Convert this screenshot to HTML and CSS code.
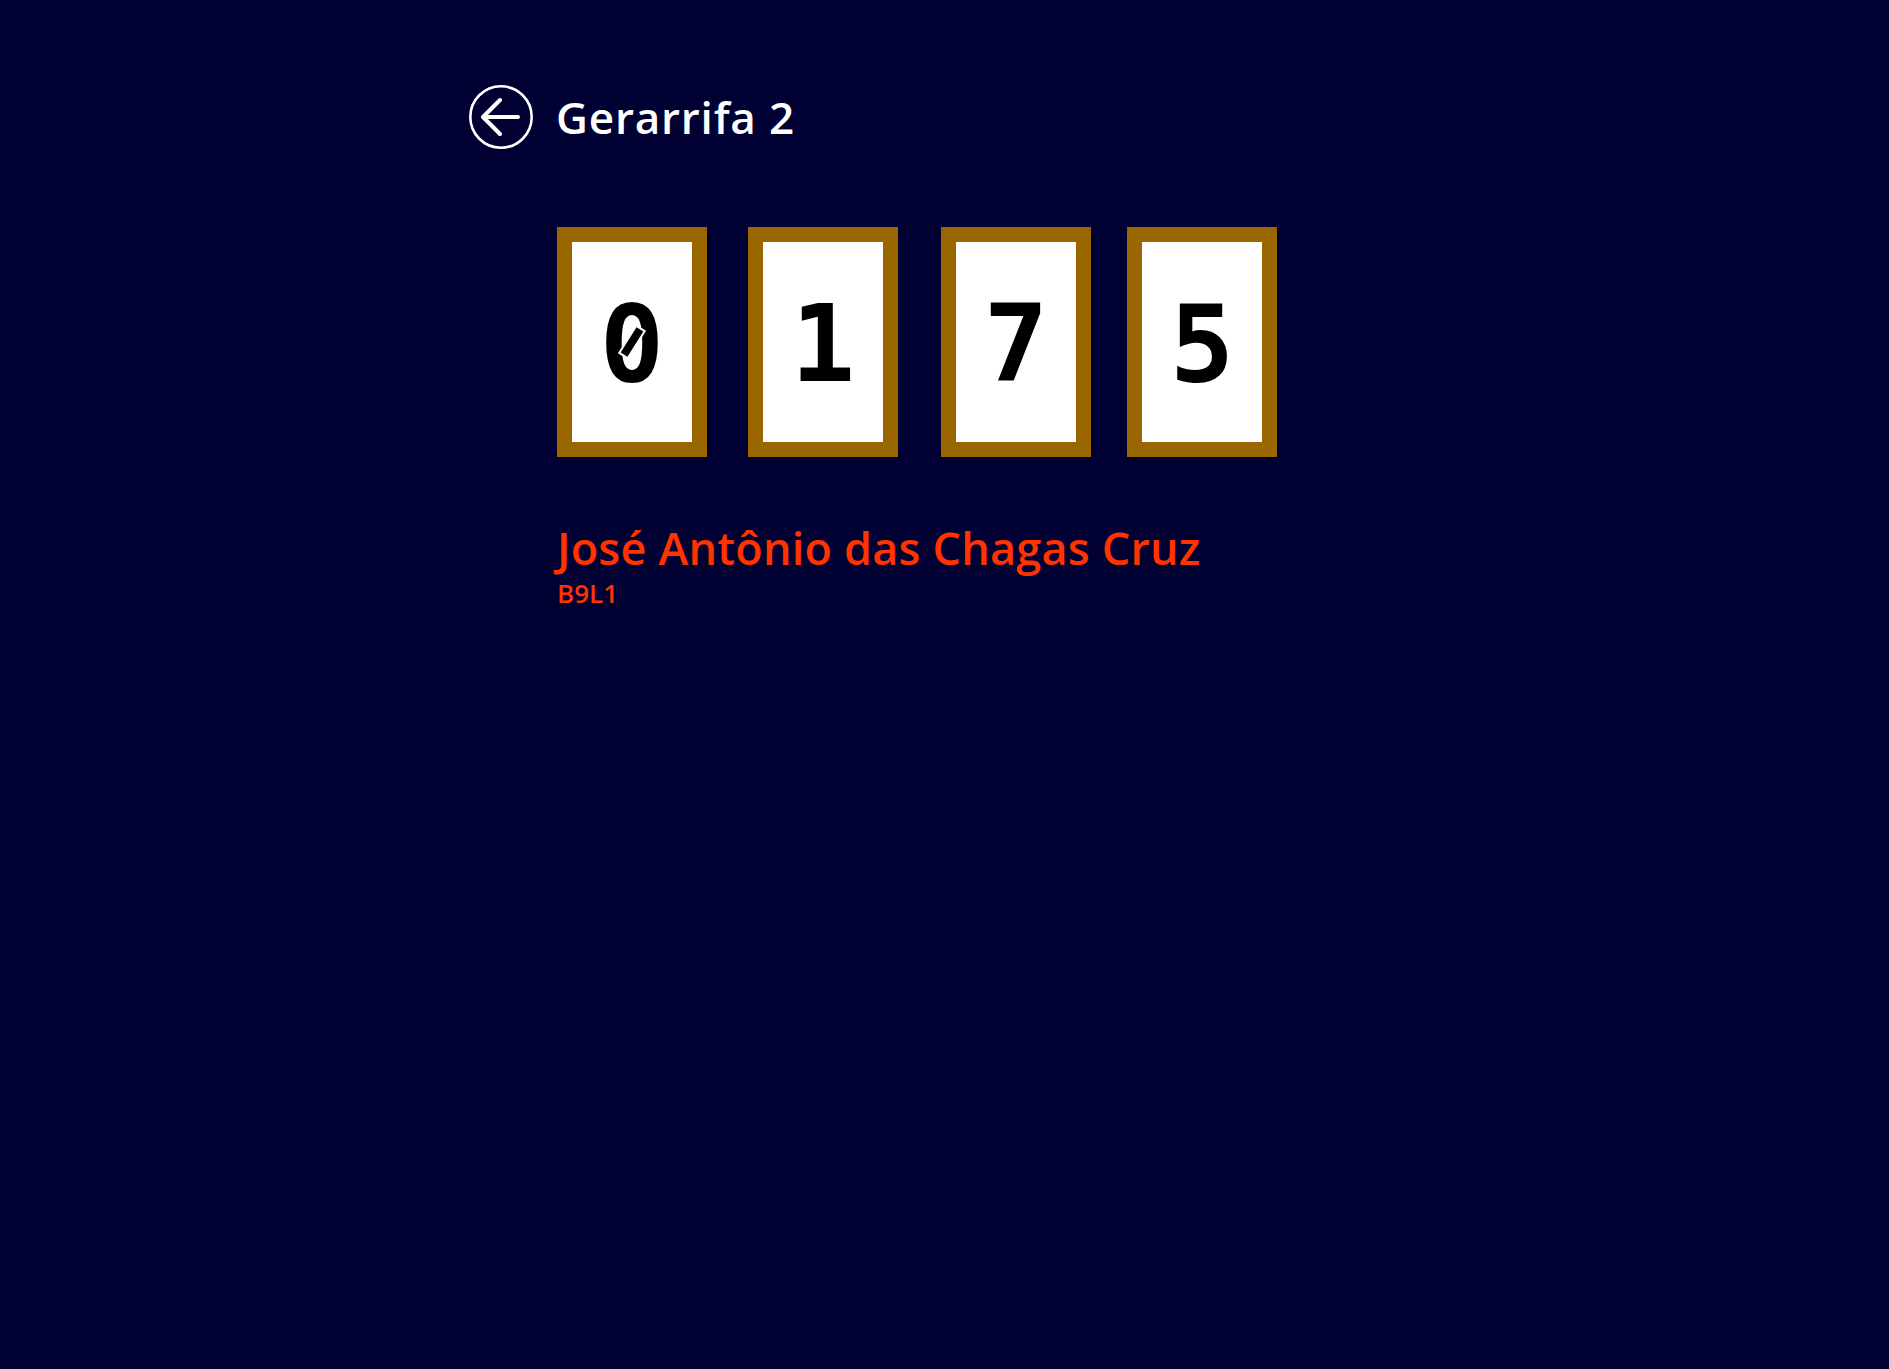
FILE: index.html
```html
<!DOCTYPE html>
<html lang="pt">
<head>
<meta charset="utf-8">
<title>Gerarrifa 2</title>
<link rel="stylesheet" href="styles.css">
</head>
<body>
<div class="page">
  <header class="header">
    <button class="back" aria-label="Voltar">
      <svg width="66" height="66" viewBox="0 0 66 66">
        <circle cx="33" cy="33" r="30.7" fill="none" stroke="#ffffff" stroke-width="2.6"/>
        <path d="M50 33 H16 M32 16 L15 33 L32 50" fill="none" stroke="#ffffff" stroke-width="4" stroke-linecap="round" stroke-linejoin="round"/>
      </svg>
    </button>
    <h1 class="title">Gerarrifa 2</h1>
  </header>
  <main class="content">
    <div class="digits">
      <div class="digit"><span class="glyph zero">0</span></div>
      <div class="digit"><span class="glyph">1</span></div>
      <div class="digit"><span class="glyph">7</span></div>
      <div class="digit"><span class="glyph">5</span></div>
    </div>
    <div class="winner">
      <div class="name">José Antônio das Chagas Cruz</div>
      <div class="code">B9L1</div>
    </div>
  </main>
</div>
</body>
</html>
```
FILE: styles.css
```css
html, body {
  margin: 0;
  padding: 0;
  background: #000033;
  min-height: 100%;
}
body {
  font-family: "Open Sans", "Lato", sans-serif;
}
.page {
  padding: 84px 0 0 468px;
}
.header {
  display: flex;
  align-items: center;
  gap: 22px;
  height: 66px;
}
.back {
  width: 66px;
  height: 66px;
  padding: 0;
  border: none;
  background: transparent;
  display: flex;
}
.title {
  margin: 0;
  color: #ffffff;
  font-size: 44px;
  font-weight: 600;
  letter-spacing: 0.8px;
  line-height: 1;
}
.content {
  padding-left: 89px;
}
.digits {
  display: flex;
  margin-top: 77px;
}
.digit {
  box-sizing: border-box;
  width: 150px;
  height: 230px;
  border: 15px solid #996600;
  background: #ffffff;
  color: #000000;
  font-family: "DejaVu Sans Mono", monospace;
  font-weight: 700;
  font-size: 107px;
  display: flex;
  align-items: center;
  justify-content: center;
}
.glyph {
  position: relative;
  display: block;
  margin-top: 4px;
}
.zero::before {
  content: "";
  position: absolute;
  left: 50%;
  top: calc(50% - 2px);
  width: 16px;
  height: 32px;
  margin: -16px 0 0 -8px;
  border-radius: 50%;
  background: #ffffff;
}
.zero::after {
  content: "";
  position: absolute;
  left: 50%;
  top: calc(50% - 2px);
  width: 30px;
  height: 8px;
  margin: -4px 0 0 -15px;
  background: #000000;
  box-shadow: 0 0 0 2px #ffffff;
  transform: rotate(-58deg);
}
.digit:nth-child(2) { margin-left: 41px; }
.digit:nth-child(3) { margin-left: 43px; }
.digit:nth-child(4) { margin-left: 36px; }
.winner {
  margin-top: 60px;
  color: #ff3300;
  font-weight: 600;
}
.name {
  font-size: 45px;
  letter-spacing: 0.2px;
  line-height: 1.36;
}
.code {
  font-size: 26px;
  line-height: 1.36;
  margin-top: -2px;
}
```
